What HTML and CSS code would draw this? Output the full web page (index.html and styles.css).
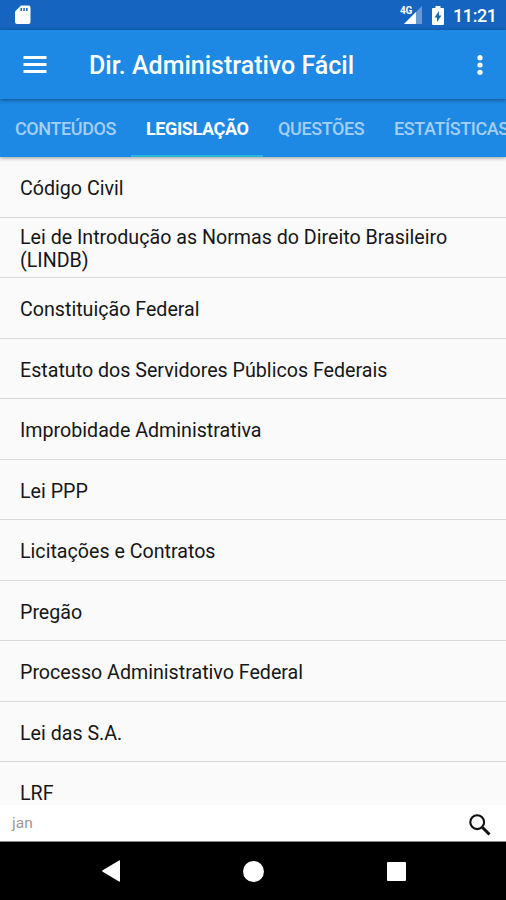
FILE: index.html
```html
<!DOCTYPE html>
<html lang="pt-BR">
<head>
<meta charset="utf-8">
<title>Dir. Administrativo Fácil</title>
<link rel="stylesheet" href="styles.css">
</head>
<body>
<div class="screen">
  <div class="status">
    <svg class="sd" width="16" height="20" viewBox="0 0 16 20"><path fill="#fff" fill-rule="evenodd" d="M6 .5h7.500q2 0 2 2v14.500q0 2-2 2h-11.500q-2 0-2-2V6.500zM5.500 3v3h1.500V3zM8.300 3v3h1.500V3zM11.100 3v3h1.500V3z"/></svg>
    <div class="status-right">
      <span class="net">4G</span>
      <svg class="signal" width="18" height="18" viewBox="0 0 18 18"><path fill="#fff" opacity=".35" d="M18 0v18H0z"/><path fill="#fff" d="M12 6v12H0z"/></svg>
      <svg class="battery" width="12" height="19" viewBox="0 0 12 19"><path fill="#fff" fill-rule="evenodd" d="M3.500 0h5v2H11q1 0 1 1v15q0 1-1 1H1q-1 0-1-1V3q0-1 1-1h2.500zM7 5l-4.500 6.500H5V16l4.500-6.500H7z"/></svg>
      <span class="clock">11:21</span>
    </div>
  </div>
  <header class="appbar">
    <svg class="menu" width="24" height="18" viewBox="0 0 24 18"><path fill="#fff" d="M.5 0h23v3H.5zM.5 7h23v3H.5zM.5 14h23v3H.5z"/></svg>
    <h1>Dir. Administrativo Fácil</h1>
    <svg class="more" width="6" height="20" viewBox="0 0 6 20"><g fill="#fff"><circle cx="3" cy="2.700" r="2.600"/><circle cx="3" cy="10" r="2.600"/><circle cx="3" cy="17.300" r="2.600"/></g></svg>
  </header>
  <nav class="tabs">
    <div class="tab t1"><span>CONTEÚDOS</span></div>
    <div class="tab t2 active"><span>LEGISLAÇÃO</span></div>
    <div class="tab t3"><span>QUESTÕES</span></div>
    <div class="tab t4"><span>ESTATÍSTICAS</span></div>
  </nav>
  <ul class="list">
    <li>Código Civil</li>
    <li>Lei de Introdução as Normas do Direito Brasileiro (LINDB)</li>
    <li>Constituição Federal</li>
    <li>Estatuto dos Servidores Públicos Federais</li>
    <li>Improbidade Administrativa</li>
    <li>Lei PPP</li>
    <li>Licitações e Contratos</li>
    <li>Pregão</li>
    <li>Processo Administrativo Federal</li>
    <li>Lei das S.A.</li>
    <li>LRF</li>
  </ul>
  <div class="search">
    <span>jan</span>
    <svg width="22" height="22" viewBox="0 0 22 22"><g fill="none" stroke="#111"><circle cx="8.200" cy="8.200" r="6.900" stroke-width="2.100"/><path stroke-width="3" d="M13.500 13.500l7 7"/></g></svg>
  </div>
  <div class="navbar">
    <svg class="back" width="18" height="22" viewBox="0 0 18 22"><path fill="#fff" d="M17 .5q1-.5 1 .6v19.800q0 1.100-1 .6L.7 11.700q-1-.7 0-1.400z"/></svg>
    <div class="home"></div>
    <div class="recent"></div>
  </div>
</div>
</body>
</html>
```
FILE: styles.css
```css
* { box-sizing: border-box; }
body { margin: 0; font-family: Roboto, sans-serif; background: #000; }
.screen {
  width: 506px;
  height: 900px;
  overflow: hidden;
  display: flex;
  flex-direction: column;
}
svg { display: block; flex: none; }
.status {
  flex: none;
  height: 30px;
  background: #1565c0;
  display: flex;
  justify-content: space-between;
  padding: 5px 10px 0 15px;
  color: #fff;
}
.status-right { display: flex; }
.net { font-size: 10px; font-weight: 700; line-height: 11px; letter-spacing: -.3px; margin-right: -8px; }
.signal { margin-top: 1px; }
.battery { margin: 1px 0 0 10px; }
.clock { font-size: 18px; font-weight: 500; line-height: 22px; letter-spacing: -.4px; margin-left: 9px; width: 43px; white-space: nowrap; }
.appbar {
  flex: none;
  height: 69px;
  background: #1e88e5;
  display: flex;
  align-items: center;
  padding: 1px 23px 0 23px;
  color: #fff;
  box-shadow: 0 1px 4px rgba(0, 0, 0, .45);
  z-index: 2;
}
.menu { margin-right: 42px; }
h1 { flex: 1; margin: 0; padding-top: 1px; font-size: 25px; font-weight: 500; line-height: 30px; white-space: nowrap; }
.tabs {
  flex: none;
  height: 58px;
  background: #1e88e5;
  display: flex;
  box-shadow: 0 1px 4px rgba(0, 0, 0, .4);
  z-index: 1;
}
.tab {
  flex: none;
  padding: 1px 0 0 15px;
  font-size: 18px;
  letter-spacing: -.4px;
  font-weight: 500;
  line-height: 58px;
  color: #a5cff4;
  white-space: nowrap;
}
.t1 { width: 131px; }
.t2 { width: 132px; }
.t3 { width: 131px; }
.t4 { width: 140px; padding-left: 0; }
.active { color: #fff; font-weight: 700; border-bottom: 2px solid #26b6d8; }
.list {
  flex: 1;
  min-height: 0;
  margin: 0;
  padding: 0;
  list-style: none;
  background: #fafafa;
  overflow: hidden;
}
.list li {
  height: 60.5px;
  display: flex;
  align-items: center;
  padding: 4px 20px 0;
  border-bottom: 1px solid #d9d9d9;
  font-size: 19.65px;
  line-height: 23px;
  color: #161616;
}
.search {
  flex: none;
  height: 37px;
  background: #fff;
  border-bottom: 1px solid #8a8a8a;
  display: flex;
  justify-content: space-between;
  padding: 9px 15px 0 12px;
  font-size: 15.5px;
  line-height: 19px;
  color: #999;
}
.navbar {
  flex: none;
  height: 58px;
  background: #000;
  display: flex;
  align-items: center;
  padding-left: 102px;
}
.home { width: 21px; height: 21px; border-radius: 50%; background: #fff; margin-left: 123px; }
.recent { width: 19px; height: 19px; border-radius: 1px; background: #fff; margin-left: 123px; }
```
